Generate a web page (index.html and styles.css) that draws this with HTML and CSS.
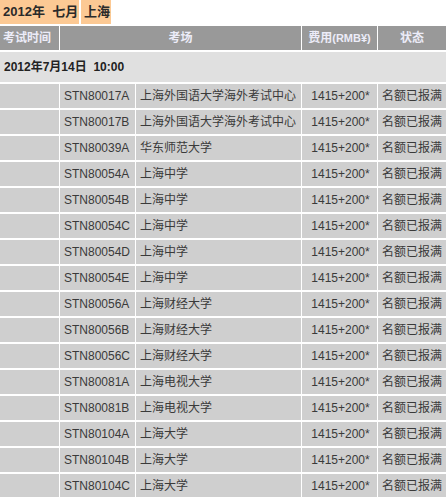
FILE: index.html
```html
<!DOCTYPE html>
<html lang="zh-CN">
<head>
<meta charset="utf-8">
<title>考位</title>
<link rel="stylesheet" href="styles.css">
</head>
<body>
<div class="tabs">
  <div class="tab tab-date">2012年&nbsp; 七月</div>
  <div class="tab tab-city">上海</div>
</div>
<div class="grid">
  <div class="hd hd-time">考试时间</div>
  <div class="hd hd-venue">考场</div>
  <div class="hd hd-fee">费用<span class="lat">(RMB¥)</span></div>
  <div class="hd hd-status">状态</div>

  <div class="date">2012年7月14日&nbsp; 10:00</div>

  <div class="c"></div><div class="c code">STN80017A</div><div class="c venue">上海外国语大学海外考试中心</div><div class="c fee">1415+200*</div><div class="c st">名额已报满</div>
  <div class="c"></div><div class="c code">STN80017B</div><div class="c venue">上海外国语大学海外考试中心</div><div class="c fee">1415+200*</div><div class="c st">名额已报满</div>
  <div class="c"></div><div class="c code">STN80039A</div><div class="c venue">华东师范大学</div><div class="c fee">1415+200*</div><div class="c st">名额已报满</div>
  <div class="c"></div><div class="c code">STN80054A</div><div class="c venue">上海中学</div><div class="c fee">1415+200*</div><div class="c st">名额已报满</div>
  <div class="c"></div><div class="c code">STN80054B</div><div class="c venue">上海中学</div><div class="c fee">1415+200*</div><div class="c st">名额已报满</div>
  <div class="c"></div><div class="c code">STN80054C</div><div class="c venue">上海中学</div><div class="c fee">1415+200*</div><div class="c st">名额已报满</div>
  <div class="c"></div><div class="c code">STN80054D</div><div class="c venue">上海中学</div><div class="c fee">1415+200*</div><div class="c st">名额已报满</div>
  <div class="c"></div><div class="c code">STN80054E</div><div class="c venue">上海中学</div><div class="c fee">1415+200*</div><div class="c st">名额已报满</div>
  <div class="c"></div><div class="c code">STN80056A</div><div class="c venue">上海财经大学</div><div class="c fee">1415+200*</div><div class="c st">名额已报满</div>
  <div class="c"></div><div class="c code">STN80056B</div><div class="c venue">上海财经大学</div><div class="c fee">1415+200*</div><div class="c st">名额已报满</div>
  <div class="c"></div><div class="c code">STN80056C</div><div class="c venue">上海财经大学</div><div class="c fee">1415+200*</div><div class="c st">名额已报满</div>
  <div class="c"></div><div class="c code">STN80081A</div><div class="c venue">上海电视大学</div><div class="c fee">1415+200*</div><div class="c st">名额已报满</div>
  <div class="c"></div><div class="c code">STN80081B</div><div class="c venue">上海电视大学</div><div class="c fee">1415+200*</div><div class="c st">名额已报满</div>
  <div class="c"></div><div class="c code">STN80104A</div><div class="c venue">上海大学</div><div class="c fee">1415+200*</div><div class="c st">名额已报满</div>
  <div class="c"></div><div class="c code">STN80104B</div><div class="c venue">上海大学</div><div class="c fee">1415+200*</div><div class="c st">名额已报满</div>
  <div class="c"></div><div class="c code">STN80104C</div><div class="c venue">上海大学</div><div class="c fee">1415+200*</div><div class="c st">名额已报满</div>
</div>
</body>
</html>
```
FILE: styles.css
```css
html, body {
  margin: 0;
  padding: 0;
  background: #ffffff;
}
body {
  font-family: "Liberation Sans", "Noto Sans CJK SC", sans-serif;
  font-size: 12px;
  color: #333333;
  width: 446px;
  overflow: hidden;
}
.tabs {
  display: flex;
  gap: 2px;
  height: 24px;
  margin-bottom: 2px;
}
.tab {
  background: #fcc994;
  color: #2a2a2a;
  font-weight: bold;
  font-size: 13px;
  line-height: 24px;
  padding: 0 3px;
  white-space: nowrap;
}
.tab-date { width: 73px; }
.tab-city { width: 24px; }
.grid {
  display: grid;
  grid-template-columns: 59px 75px 165px 75px 68px;
  grid-template-rows: 24px 30px;
  grid-auto-rows: 24px;
  column-gap: 1px;
  row-gap: 2px;
}
.hd {
  background: #999999;
  color: #ececf8;
  font-weight: bold;
  line-height: 24px;
  text-align: center;
  white-space: nowrap;
}
.hd-time { text-align: left; padding-left: 3px; }
.hd-venue { grid-column: 2 / 4; }
.hd .lat { font-size: 11px; }
.date {
  grid-column: 1 / -1;
  background: #e0e0e0;
  color: #222222;
  font-weight: bold;
  line-height: 30px;
  padding-left: 4px;
}
.c {
  background: #cfcfcf;
  line-height: 24px;
  white-space: nowrap;
  overflow: hidden;
  color: #3a3a3a;
}
.code { padding-left: 4px; }
.venue { padding-left: 4px; }
.fee { text-align: center; padding-left: 2px; }
.st { padding-left: 4px; }
```
